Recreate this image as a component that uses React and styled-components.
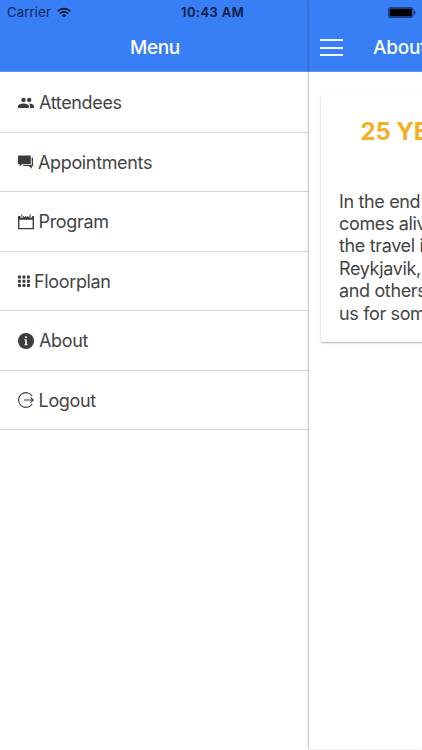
import React from "react";
import styled, { createGlobalStyle } from "styled-components";

const GlobalStyle = createGlobalStyle`
  *, *::before, *::after { box-sizing: border-box; }
  html, body { margin: 0; padding: 0; background: #fff; }
  body {
    width: 422px;
    height: 750px;
    overflow: hidden;
    font-family: Inter, "Liberation Sans", sans-serif;
    color: #444;
    -webkit-font-smoothing: antialiased;
  }
`;

const Screen = styled.div`
  display: grid;
  grid-template-columns: 309px 1fr;
  width: 422px;
  height: 750px;
  overflow: hidden;
  background: #fff;
`;

const SideMenu = styled.nav`
  min-width: 0;
`;

const Page = styled.main`
  min-width: 0;
  height: 749px;
  background: #fff;
  box-shadow: -1px 0 2px rgba(0, 0, 0, 0.24);
`;

const Header = styled.header`
  display: flex;
  flex-direction: column;
  height: 72px;
  background: #387ef5;
  border-bottom: 1px solid #5f93f2;
  overflow: hidden;
`;

const StatusBar = styled.div`
  display: flex;
  align-items: center;
  height: 24px;
  color: #0b1a3c;
  font-size: 13px;
  line-height: 24px;
`;

const Carrier = styled.span`
  width: 50px;
  margin-left: 7px;
  letter-spacing: 0.2px;
  color: #102659;
`;

const WifiIcon = styled.svg`
  width: 14px;
  height: 11px;
  flex: none;
`;

const Clock = styled.span`
  margin-left: 110px;
  font-weight: 600;
  font-size: 13px;
  letter-spacing: 0.4px;
  white-space: nowrap;
`;

const BatteryIcon = styled.svg`
  width: 28px;
  height: 11px;
  margin-left: 79px;
  flex: none;
`;

const MenuTitle = styled.h1`
  margin: 0;
  height: 47px;
  padding-left: 1px;
  text-align: center;
  font-size: 19px;
  font-weight: 500;
  letter-spacing: -0.4px;
  line-height: 48px;
  color: #fff;
`;

const PageBar = styled.div`
  display: flex;
  align-items: center;
  height: 47px;
  padding-left: 11px;
`;

const MenuButton = styled.button`
  display: flex;
  flex-direction: column;
  justify-content: space-between;
  width: 23px;
  height: 17px;
  padding: 0;
  border: 0;
  background: none;
  flex: none;
`;

const MenuButtonBar = styled.span`
  width: 23px;
  height: 2px;
  background: #f4f8ff;
`;

const PageTitle = styled.h2`
  margin: 1px 0 0 30px;
  font-size: 19px;
  font-weight: 500;
  letter-spacing: -0.2px;
  line-height: 46px;
  color: #fff;
  white-space: nowrap;
`;

const List = styled.ul`
  margin: 0;
  padding: 1.4px 0 0;
  list-style: none;
`;

const Item = styled.li`
  display: flex;
  align-items: center;
  height: 59.5px;
  padding-left: 18px;
  border-bottom: 1px solid #d6d6d6;
`;

const ItemIcon = styled.svg`
  width: ${(p) => p.$width}px;
  height: 16px;
  flex: none;
  color: #3c3c3c;
`;

const Label = styled.span`
  margin-left: ${(p) => p.$gap}px;
  padding-top: 1px;
  font-size: 18px;
  line-height: 24px;
  letter-spacing: -0.35px;
`;

const Card = styled.section`
  width: 340px;
  height: 247px;
  margin: 23px 0 0 12px;
  padding: 22px 18px 0;
  border-radius: 2px;
  background: #fff;
  box-shadow: 0 1px 2px rgba(0, 0, 0, 0.32);
`;

const PageContent = styled.div`
  overflow: hidden;
  height: 677px;
`;

const CardTitle = styled.h3`
  margin: 0 0 0 21.5px;
  height: 73.6px;
  font-size: 24px;
  font-weight: 700;
  line-height: 30px;
  letter-spacing: -0.1px;
  color: #f5ae27;
  white-space: nowrap;
`;

const CardText = styled.p`
  margin: 0;
  font-size: 18px;
  line-height: 22.4px;
  letter-spacing: -0.35px;
`;

const Line = styled.span`
  display: block;
  white-space: nowrap;
`;

const icons = {
  people: (
    <g fill="currentColor">
      <circle cx="5.5" cy="4.900" r="2.200" />
      <circle cx="11.200" cy="4.900" r="2.200" />
      <path d="M0 13v-1.800C0 9.400 3.300 8.500 5.500 8.500s5.400.9 5.400 2.700V13z" />
      <path d="M11.200 8.500c2.300 0 4.800.9 4.800 2.700V13h-4v-1.800c0-1-.5-2-1.100-2.600z" />
    </g>
  ),
  chat: (
    <g fill="currentColor">
      <path d="M0 1.500h12.800v8.800H4L1.700 12.500v-2.200H0z" />
      <path d="M13.700 3.500h1.300v8.500h-1.200v2.800L10.900 12H4.800l.9-.9h8z" />
    </g>
  ),
  calendar: (
    <g>
      <path
        fillRule="evenodd"
        fill="currentColor"
        d="M0 2h2.400v1.500h2.800V2h.8v1h1V2h.8v1h1V2h.8v1h1V2h.8v1.500h2.800V2H16v13.300H0zM1.400 5.800v8.200h13.200V5.800z"
      />
      <path d="M3.800.4v2.400M12.200.4v2.400" fill="none" stroke="currentColor" strokeWidth="1.100" />
    </g>
  ),
  grid: (
    <path
      fill="currentColor"
      d="M0 2.500h2.900v2.900H0zM4.500 2.500h2.900v2.900h-2.900zM9 2.500h2.900v2.900H9zM0 6.800h2.900v2.900H0zM4.500 6.800h2.900v2.900h-2.900zM9 6.800h2.900v2.900H9zM0 11.100h2.900v2.900H0zM4.500 11.100h2.900v2.900h-2.900zM9 11.100h2.900v2.900H9z"
    />
  ),
  info: (
    <g>
      <circle cx="8" cy="8" r="8" fill="currentColor" />
      <circle cx="8" cy="4.300" r="1.150" fill="#fff" />
      <path d="M6.200 6.500h2.600v5h1v.8H6.200v-.8h1V7.300h-1z" fill="#fff" />
    </g>
  ),
  logout: (
    <g fill="none" stroke="currentColor" strokeWidth="1.100">
      <path d="M14.200 4A7.400 7.400 0 1 0 14.200 12" />
      <path d="M6 8h9.200M12.500 5.300L15.200 8l-2.700 2.700" />
    </g>
  ),
};

const menuItems = [
  { icon: "people", label: "Attendees", width: 16, gap: 5 },
  { icon: "chat", label: "Appointments", width: 15, gap: 5 },
  { icon: "calendar", label: "Program", width: 16, gap: 4.6 },
  { icon: "grid", label: "Floorplan", width: 12, gap: 4 },
  { icon: "info", label: "About", width: 16, gap: 5 },
  { icon: "logout", label: "Logout", width: 16, gap: 4.6 },
];

const cardLines = [
  "In the end",
  "comes alive",
  "the travel in",
  "Reykjavik,",
  "and others",
  "us for some",
];

export default function App() {
  return (
    <>
      <GlobalStyle />
      <Screen>
        <SideMenu>
          <Header>
            <StatusBar>
              <Carrier>Carrier</Carrier>
              <WifiIcon viewBox="0 0 14 11">
                <g fill="none" stroke="#07122b" strokeWidth="1.700">
                  <path d="M.7 4.100a9 9 0 0 1 12.600 0" />
                  <path d="M3 6.500a5.800 5.800 0 0 1 8 0" />
                </g>
                <path d="M7 10.500L4.900 8.400a3 3 0 0 1 4.200 0z" fill="#07122b" />
              </WifiIcon>
              <Clock>10:43 AM</Clock>
            </StatusBar>
            <MenuTitle>Menu</MenuTitle>
          </Header>
          <List>
            {menuItems.map(({ icon, label, width, gap }) => (
              <Item key={label}>
                <ItemIcon $width={width} viewBox={`0 0 ${width} 16`}>
                  {icons[icon]}
                </ItemIcon>
                <Label $gap={gap}>{label}</Label>
              </Item>
            ))}
          </List>
        </SideMenu>
        <Page>
          <Header>
            <StatusBar>
              <BatteryIcon viewBox="0 0 28 11">
                <rect x=".5" y=".5" width="24.500" height="10" rx="1.500" fill="none" stroke="#1b438c" />
                <rect x="1.500" y="1.500" width="22.500" height="8" rx=".5" fill="#000" />
                <path d="M26 3.500c1.800.8 1.800 3.200 0 4z" fill="#0b1a3c" />
              </BatteryIcon>
            </StatusBar>
            <PageBar>
              <MenuButton aria-label="Toggle menu">
                <MenuButtonBar />
                <MenuButtonBar />
                <MenuButtonBar />
              </MenuButton>
              <PageTitle>About</PageTitle>
            </PageBar>
          </Header>
          <PageContent>
            <Card>
              <CardTitle>25 YEARS</CardTitle>
              <CardText>
                {cardLines.map((line) => (
                  <Line key={line}>{line}</Line>
                ))}
              </CardText>
            </Card>
          </PageContent>
        </Page>
      </Screen>
    </>
  );
}
